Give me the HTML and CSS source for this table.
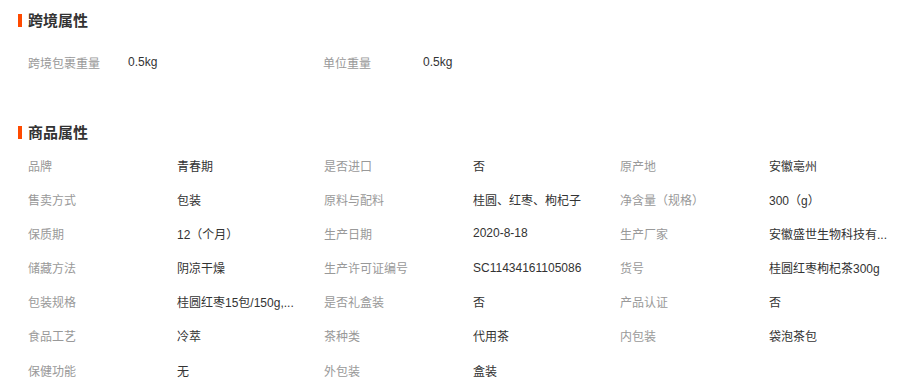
FILE: index.html
```html
<!DOCTYPE html>
<html lang="zh-CN">
<head>
<meta charset="utf-8">
<title>属性</title>
<link rel="stylesheet" href="styles.css">
</head>
<body>
<section class="block block-cross">
  <h3 class="block-title">跨境属性</h3>
  <div class="cross-grid">
    <div class="cross-item"><span class="label">跨境包裹重量</span><span class="value">0.5kg</span></div>
    <div class="cross-item"><span class="label">单位重量</span><span class="value">0.5kg</span></div>
  </div>
</section>
<section class="block block-attr">
  <h3 class="block-title">商品属性</h3>
  <div class="attr-grid">
    <span class="label">品牌</span><span class="value">青春期</span>
    <span class="label">是否进口</span><span class="value">否</span>
    <span class="label">原产地</span><span class="value">安徽亳州</span>

    <span class="label">售卖方式</span><span class="value">包装</span>
    <span class="label">原料与配料</span><span class="value">桂圆、红枣、枸杞子</span>
    <span class="label">净含量（规格）</span><span class="value">300（g）</span>

    <span class="label">保质期</span><span class="value">12（个月）</span>
    <span class="label">生产日期</span><span class="value">2020-8-18</span>
    <span class="label">生产厂家</span><span class="value">安徽盛世生物科技有...</span>

    <span class="label">储藏方法</span><span class="value">阴凉干燥</span>
    <span class="label">生产许可证编号</span><span class="value">SC11434161105086</span>
    <span class="label">货号</span><span class="value">桂圆红枣枸杞茶300g</span>

    <span class="label">包装规格</span><span class="value">桂圆红枣15包/150g,...</span>
    <span class="label">是否礼盒装</span><span class="value">否</span>
    <span class="label">产品认证</span><span class="value">否</span>

    <span class="label">食品工艺</span><span class="value">冷萃</span>
    <span class="label">茶种类</span><span class="value">代用茶</span>
    <span class="label">内包装</span><span class="value">袋泡茶包</span>

    <span class="label">保健功能</span><span class="value">无</span>
    <span class="label">外包装</span><span class="value">盒装</span>
  </div>
</section>
</body>
</html>
```
FILE: styles.css
```css
html, body {
  margin: 0;
  padding: 0;
  background: #fff;
}
body {
  font-family: "Liberation Sans", "Noto Sans CJK SC", sans-serif;
  font-size: 12px;
  color: #333;
  padding-left: 18px;
}
.block-title {
  display: flex;
  align-items: center;
  gap: 6px;
  margin: 0;
  height: 20px;
  line-height: 20px;
  font-size: 15px;
  font-weight: bold;
  color: #333;
  font-family: "Noto Sans CJK SC", sans-serif;
}
.block-title::before {
  content: "";
  width: 4px;
  height: 13px;
  background: #ff4a00;
}
.block-cross {
  padding-top: 10px;
}
.cross-grid {
  display: grid;
  grid-template-columns: 295px 295px;
  margin-top: 15px;
  padding-left: 10px;
}
.cross-item {
  display: flex;
  height: 34px;
  align-items: center;
}
.cross-item .label {
  width: 100px;
}
.label {
  color: #999;
  white-space: nowrap;
}
.value {
  color: #333;
  white-space: nowrap;
}
.block-attr {
  margin-top: 43px;
}
.attr-grid {
  display: grid;
  grid-template-columns: 149px 147px 149px 147px 149px 147px;
  grid-auto-rows: 34.17px;
  align-items: center;
  margin-top: 6px;
  padding-left: 10px;
}
```
